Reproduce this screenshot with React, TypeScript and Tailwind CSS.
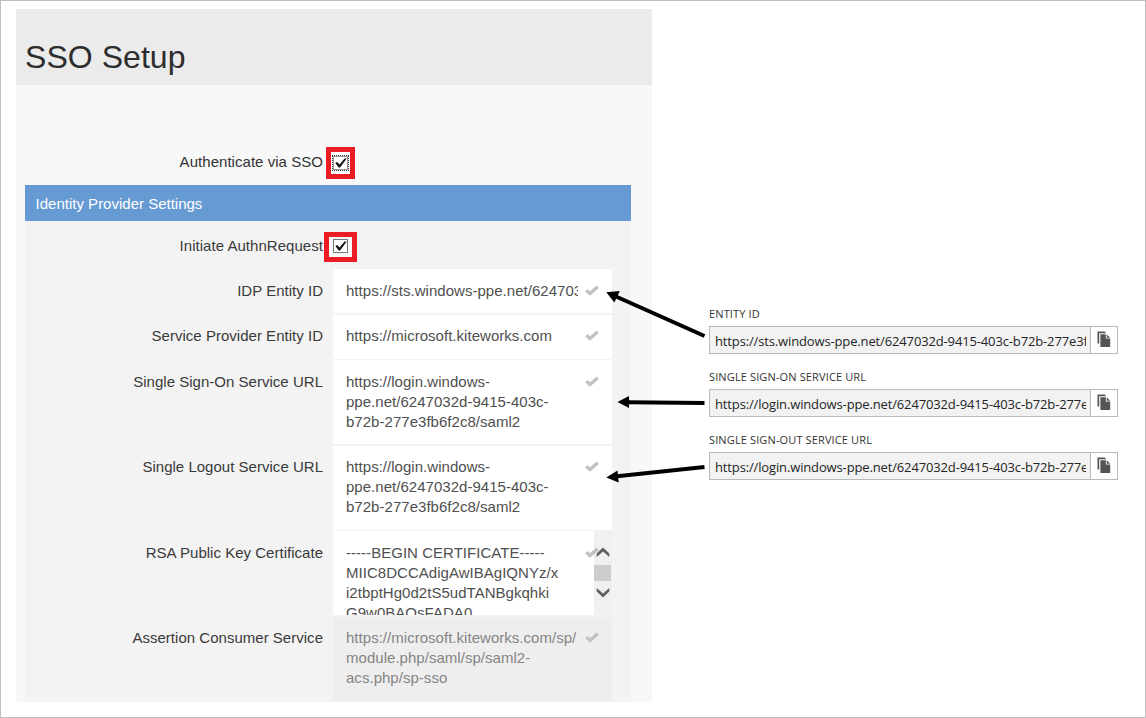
import type { ReactNode } from "react";

function Tick({ raised }: { raised?: boolean }) {
  return (
    <svg
      className={`absolute left-[252px] h-[11px] w-[14px] ${raised ? "top-[15px]" : "top-[16px]"}`}
      viewBox="0 0 14 11"
      fill="none"
    >
      <path d="M1.3 5.2 L5 8.5 L12.7 1.7" stroke="#c2c2c2" strokeWidth="3.5" />
    </svg>
  );
}

function CheckMark() {
  return (
    <svg className="h-[11px] w-[12px] shrink-0" viewBox="0 0 12 11">
      <path d="M0.3 5 L2.3 4 L4.5 6.5 L9.6 0.6 L11.7 0.6 L5.1 9.5 L3.7 9.5 Z" fill="#151515" />
    </svg>
  );
}

type FieldProps = {
  label: string;
  lines: string[];
  className: string;
  muted?: boolean;
  raised?: boolean;
  children?: ReactNode;
};

function Field({ label, lines, className, muted, raised, children }: FieldProps) {
  const pad = raised ? "pt-[11px]" : "pt-3";
  return (
    <div className={`flex ${className}`}>
      <div className={`w-[298px] shrink-0 text-right leading-5 tracking-[0.02px] whitespace-nowrap text-[#3a3a3a] ${pad}`}>
        {label}
      </div>
      <div
        className={`relative ml-[10px] flex w-[279px] overflow-hidden pl-[13px] leading-5 tracking-[0.03px] ${pad} ${
          muted ? "bg-[#eeeeee] text-[#858585]" : "bg-white text-[#4f4f4f]"
        }`}
      >
        <div className="w-[232px] overflow-hidden whitespace-nowrap">
          {lines.map((line) => (
            <div key={line}>{line}</div>
          ))}
        </div>
        {children}
        <Tick raised={raised} />
      </div>
    </div>
  );
}

function ScrollBar() {
  return (
    <div className="absolute top-0 right-0 flex h-full w-[18px] flex-col items-center bg-[#f0f0f0] pt-[16px] pr-px">
      <svg className="h-[10px] w-[14px] shrink-0" viewBox="0 0 14 10">
        <path d="M0.7 10 V6.4 L7 0.6 L13.3 6.4 V10 L7 4.6 Z" fill="#606060" />
      </svg>
      <div className="mt-[8px] h-[16px] w-[17px] shrink-0 bg-[#cdcdcd]" />
      <svg className="mt-[7px] h-[10px] w-[14px] shrink-0" viewBox="0 0 14 10">
        <path d="M0.7 0 V3.6 L7 9.4 L13.3 3.6 V0 L7 5.4 Z" fill="#606060" />
      </svg>
    </div>
  );
}

function CopyIcon() {
  return (
    <svg className="h-[17px] w-[14px]" viewBox="0 0 14 17" fill="#555555">
      <path d="M0.5 0.5 H7.6 L9.4 2.2 H2.2 V12.4 H0.5 Z" />
      <path d="M3.4 3.3 H8.8 V7.6 H13.2 V16 H3.4 Z" />
      <path d="M9.7 3.3 L13.2 6.7 H9.7 Z" />
    </svg>
  );
}

function CopyField({ label, value }: { label: string; value: string }) {
  return (
    <div className="h-[63px] w-[409px]">
      <div className="h-[20px] text-[11px] leading-[15px] tracking-[0.13px] whitespace-nowrap text-[#333333]">{label}</div>
      <div className="flex h-[28px] border border-[#bababa]">
        <div className="w-[381px] border-r border-[#bababa] bg-[#f2f2f2] pr-[4px] pl-[5px]">
          <div className="overflow-hidden text-[13px] leading-[28px] tracking-[-0.14px] whitespace-nowrap text-[#252525]">{value}</div>
        </div>
        <div className="flex flex-1 items-start justify-center bg-white pt-[4px]">
          <CopyIcon />
        </div>
      </div>
    </div>
  );
}

const login = ["https://login.windows-", "ppe.net/6247032d-9415-403c-", "b72b-277e3fb6f2c8/saml2"];
const loginUrl = "https://login.windows-ppe.net/6247032d-9415-403c-b72b-277e3fb6f2c8/saml2";

export default function App() {
  return (
    <div className="relative flex h-[718px] w-[1146px] items-start overflow-hidden border border-[#bfbfbf] bg-white pt-[8px] pl-[15px]">
      <div className="flex h-[693px] w-[636px] shrink-0 flex-col bg-[#f8f8f8] font-['Liberation_Sans',Arial,sans-serif] text-[15px]">
        <div className="h-[76px] bg-[#ebebeb] pt-[30px] pl-[9px] text-[32px] leading-[36px] tracking-[0.05px] text-[#2d2d2d]">SSO Setup</div>

        <div className="flex h-[100px] pt-[62px]">
          <div className="w-[307px] pt-[5px] text-right leading-5 tracking-[0.04px] text-[#333333]">Authenticate via SSO</div>
          <div className="ml-[3px] flex h-[32px] w-[29px] items-center justify-center border-[5px] border-[#ed1c24] bg-white">
            <div className="flex h-[16px] w-[17px] items-center justify-center border border-dotted border-[#333333] bg-white outline-1 -outline-offset-2 outline-[#999999]">
              <CheckMark />
            </div>
          </div>
        </div>

        <div className="ml-[9px] flex w-[606px] flex-1 flex-col bg-[#f3f3f3]">
          <div className="h-[36px] bg-[#659ad3] pl-[10.6px] leading-[37px] text-white">Identity Provider Settings</div>

          <div className="flex h-[48px] pt-[11px]">
            <div className="w-[298px] pt-[4px] text-right leading-5 tracking-[0.04px] text-[#3a3a3a]">Initiate AuthnRequest</div>
            <div className="ml-[1px] flex h-[30px] w-[33px] items-start border-[5px] border-[#ed1c24] bg-[#f8f8f8] pt-[2px] pl-[4px]">
              <div className="flex h-[14px] w-[15px] items-center justify-center border border-[#777777] bg-white">
                <CheckMark />
              </div>
            </div>
          </div>

          <Field className="h-[44px]" label="IDP Entity ID" lines={["https://sts.windows-ppe.net/6247032d-9415"]} />
          <Field className="mt-[2px] h-[44px]" label="Service Provider Entity ID" lines={["https://microsoft.kiteworks.com"]} raised />
          <Field className="mt-px h-[84px]" label="Single Sign-On Service URL" lines={login} />
          <Field className="mt-[2px] h-[84px]" label="Single Logout Service URL" lines={login} raised />
          <Field
            className="mt-px h-[84px]"
            label="RSA Public Key Certificate"
            lines={["-----BEGIN CERTIFICATE-----", "MIIC8DCCAdigAwIBAgIQNYz/x", "i2tbptHg0d2tS5udTANBgkqhki", "G9w0BAQsFADA0"]}
          >
            <ScrollBar />
          </Field>
          <Field
            className="mt-[2px] h-[84px]"
            label="Assertion Consumer Service"
            lines={["https://microsoft.kiteworks.com/sp/", "module.php/saml/sp/saml2-", "acs.php/sp-sso"]}
            muted
            raised
          />
        </div>
      </div>

      <div className="mt-[297px] ml-[57px] flex flex-col font-['Open_Sans','Noto_Sans',sans-serif]">
        <CopyField label="ENTITY ID" value="https://sts.windows-ppe.net/6247032d-9415-403c-b72b-277e3fb6f2c8/" />
        <CopyField label="SINGLE SIGN-ON SERVICE URL" value={loginUrl} />
        <CopyField label="SINGLE SIGN-OUT SERVICE URL" value={loginUrl} />
      </div>

      <svg className="absolute -top-px -left-px h-[718px] w-[1146px]" viewBox="0 0 1146 718" fill="#000" stroke="#000">
        <path d="M704.5 336 L616 296.5 M704.5 403 L628 402.3 M704.5 467 L617 476.3" strokeWidth="4" fill="none" />
        <path stroke="none" d="M606.3 292.2 L619.8 291 L614.3 302.5 Z M617.5 402 L629 396 L629 408 Z M606.3 477.6 L617.5 470.5 L618.7 482.5 Z" />
      </svg>
    </div>
  );
}
